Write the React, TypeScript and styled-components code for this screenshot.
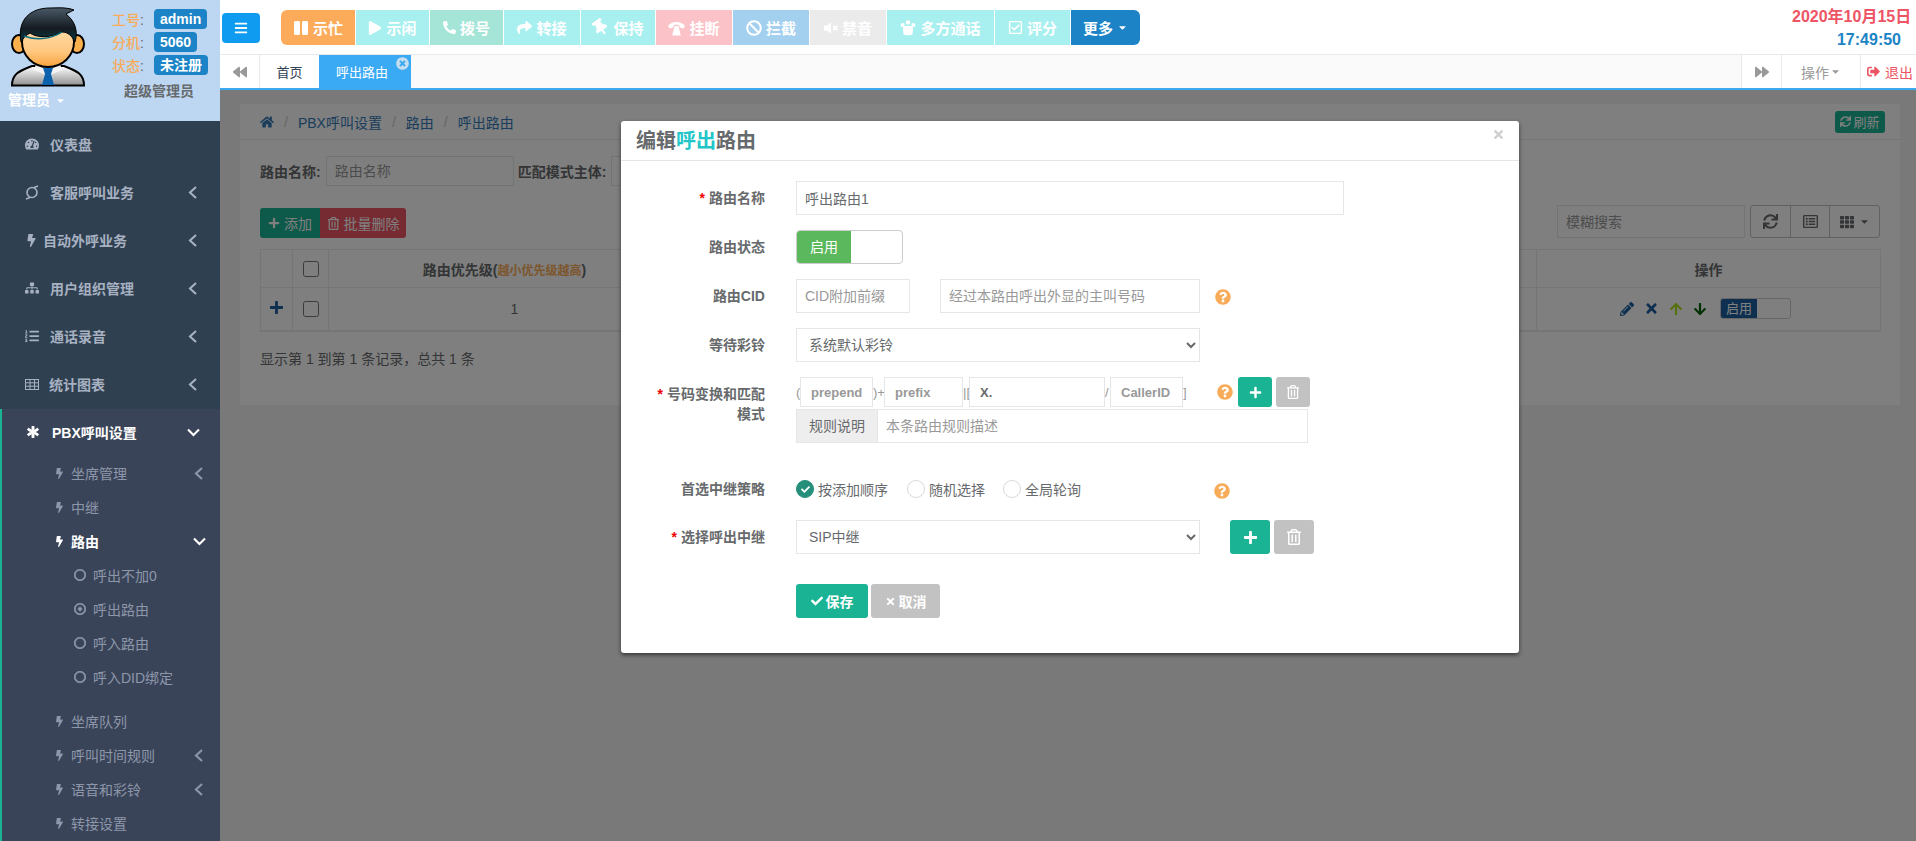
import React from "react";
import styled, { createGlobalStyle } from "styled-components";
import {
  FaArrowDown,
  FaArrowUp,
  FaAsterisk,
  FaBackward,
  FaBan,
  FaBars,
  FaBolt,
  FaCaretDown,
  FaCheck,
  FaForward,
  FaHome,
  FaListOl,
  FaPencilAlt,
  FaPhoneAlt,
  FaPlay,
  FaPause,
  FaPlus,
  FaQuestionCircle,
  FaRegCheckSquare,
  FaRegCircle,
  FaRegDotCircle,
  FaRegListAlt,
  FaRegTrashAlt,
  FaShare,
  FaSignOutAlt,
  FaSitemap,
  FaSync,
  FaTachometerAlt,
  FaTh,
  FaThumbtack,
  FaTimes,
  FaTimesCircle,
  FaVolumeMute,
} from "react-icons/fa";

const GlobalStyle = createGlobalStyle`
  html, body {
    margin: 0;
    padding: 0;
    height: 100%;
    overflow: hidden;
  }
  body {
    font-family: "Liberation Sans", "Noto Sans CJK SC", sans-serif;
    font-size: 14px;
    color: #676a6c;
  }
  * {
    box-sizing: border-box;
  }
`;

const Page = styled.div`
  display: grid;
  grid-template-columns: 220px 1fr;
  width: 1916px;
  height: 841px;
  overflow: hidden;
`;

/* ---------- sidebar ---------- */

const Sidebar = styled.aside`
  background: #2f4050;
  height: 841px;
  overflow: hidden;
`;

const Profile = styled.div`
  height: 121px;
  background: #bdd7f2;
  display: grid;
  grid-template-columns: 112px 1fr;
  padding-top: 5px;
`;

const ProfileLeft = styled.div`
  padding-left: 10px;
`;

const UserName = styled.div`
  color: #fff;
  font-weight: 700;
  font-size: 14px;
  line-height: 18px;
  margin: 1px 0 0 -2px;
  display: flex;
  align-items: center;
  gap: 5px;
`;

const ProfileRight = styled.div`
  padding-top: 4px;
`;

const InfoRow = styled.div`
  display: flex;
  align-items: center;
  height: 20px;
  margin-bottom: 3px;
  font-size: 14px;
`;

const InfoLabel = styled.span`
  color: #f8ac59;
  width: 42px;
  font-weight: 500;
`;

const Colon = styled.span`
  color: #676a6c;
`;

const Badge = styled.span`
  background: #1c84c6;
  color: #fff;
  font-weight: 700;
  font-size: 14px;
  line-height: 20px;
  height: 20px;
  padding: 0 6px;
  border-radius: 4px;
`;

const RoleName = styled.div`
  color: #676a6c;
  font-weight: 700;
  font-size: 14px;
  line-height: 18px;
  margin: 7px 0 0 12px;
`;

const TopItem = styled.div<{ $active?: boolean }>`
  height: 48px;
  display: flex;
  align-items: center;
  padding: 0 0 2px 25px;
  color: ${(p) => (p.$active ? "#fff" : "#a7b1c2")};
  font-weight: ${(p) => (p.$active ? 700 : 600)};
  font-size: 14px;
`;

const TopIcon = styled.span<{ $w: number }>`
  width: ${(p) => p.$w}px;
  display: flex;
  align-items: center;
  flex: none;
`;

const ItemArrow = styled.span<{ $right: number; $light?: boolean }>`
  margin-left: auto;
  margin-right: ${(p) => p.$right}px;
  display: flex;
  color: ${(p) => (p.$light ? "#fff" : "inherit")};
`;

const ActiveGroup = styled.div`
  background: #3a4459;
  border-left: 2px solid #1ab394;
  height: 432px;
`;

const SubItem = styled.div<{ $active?: boolean }>`
  height: 34px;
  display: flex;
  align-items: center;
  padding: 0 0 2px 52px;
  color: ${(p) => (p.$active ? "#fff" : "#8d97aa")};
  font-weight: ${(p) => (p.$active ? 700 : 400)};
`;

const LeafList = styled.div`
  margin-bottom: 10px;
`;

const LeafItem = styled.div`
  height: 34px;
  display: flex;
  align-items: center;
  gap: 7px;
  padding: 0 0 2px 72px;
  color: #8d97aa;
`;

/* ---------- top bar ---------- */

const Main = styled.main`
  display: flex;
  flex-direction: column;
  min-width: 0;
`;

const Topbar = styled.div`
  height: 55px;
  flex: none;
  background: #fff;
  border-bottom: 1px solid #e7eaec;
  display: flex;
  align-items: flex-start;
  padding-left: 2px;
`;

const MenuToggle = styled.button`
  width: 38px;
  height: 30px;
  margin-top: 13px;
  border: none;
  border-radius: 4px;
  background: #0f9bef;
  color: #fff;
  display: flex;
  align-items: center;
  justify-content: center;
  padding: 0;
`;

const ActionGroup = styled.div`
  display: flex;
  gap: 1px;
  margin: 10px 0 0 21px;
`;

const ActionButton = styled.button<{ $bg: string; $w: number }>`
  width: ${(p) => p.$w}px;
  height: 35px;
  border: none;
  padding: 0;
  background: ${(p) => p.$bg};
  color: #fff;
  font-family: inherit;
  font-weight: 700;
  font-size: 15px;
  display: flex;
  align-items: center;
  justify-content: center;
  gap: 4px;
  &:first-child {
    border-radius: 6px 0 0 6px;
  }
  &:last-child {
    border-radius: 0 6px 6px 0;
  }
`;

const TiltedTack = styled(FaThumbtack)`
  transform: rotate(-35deg);
`;

const DateBox = styled.div`
  margin-left: auto;
  width: 124px;
  padding-top: 5px;
  text-align: center;
  font-size: 16px;
  line-height: 23px;
  font-weight: 700;
`;

const DateLine = styled.div`
  color: #ed5565;
  white-space: nowrap;
  padding-right: 6px;
`;

const TimeLine = styled.div`
  color: #1c84c6;
  padding-left: 30px;
`;

const TabBar = styled.div`
  height: 35px;
  flex: none;
  background: #fafafa;
  border-bottom: 2px solid #3baaf0;
  display: flex;
  font-size: 13px;
`;

const TabArrow = styled.div<{ $left?: boolean }>`
  width: 40px;
  background: #fff;
  color: #999;
  display: flex;
  align-items: center;
  justify-content: center;
  border-left: ${(p) => (p.$left ? "1px solid #e7eaec" : "none")};
  border-right: ${(p) => (p.$left ? "none" : "1px solid #e7eaec")};
`;

const Tab = styled.div<{ $active?: boolean }>`
  position: relative;
  width: ${(p) => (p.$active ? 92 : 59)}px;
  background: ${(p) => (p.$active ? "#3baaf5" : "#fff")};
  color: ${(p) => (p.$active ? "#fff" : "#2f4050")};
  display: flex;
  align-items: center;
  justify-content: center;
  padding-right: ${(p) => (p.$active ? 6 : 0)}px;
`;

const TabClose = styled.span`
  position: absolute;
  top: 2px;
  right: 2px;
  color: #c6ddee;
  display: flex;
`;

const TabFill = styled.div`
  flex: 1;
`;

const TabMenu = styled.div`
  width: 79px;
  background: #fff;
  color: #999;
  border-left: 1px solid #e7eaec;
  display: flex;
  align-items: center;
  justify-content: center;
  gap: 1px;
  font-size: 14px;
`;

const TabLogout = styled.div`
  width: 56px;
  background: #fff;
  color: #ed5565;
  border-left: 1px solid #e7eaec;
  display: flex;
  align-items: center;
  justify-content: center;
  gap: 5px;
  padding-left: 3px;
  font-size: 14px;
`;

/* ---------- page behind the dialog ---------- */

const Content = styled.div`
  position: relative;
  flex: 1;
  background: #f3f3f4;
  padding: 14px 16px 0 20px;
`;

const Panel = styled.section`
  background: #fff;
  height: 301px;
`;

const Breadcrumb = styled.div`
  height: 36px;
  border-bottom: 1px solid #e7eaec;
  display: flex;
  align-items: center;
  padding: 0 15px 0 20px;
  color: #337ab7;
`;

const Crumb = styled.span`
  color: #337ab7;
`;

const CrumbSep = styled.span`
  color: #ccc;
  margin: 0 10px;
`;

const RefreshButton = styled.button`
  margin-left: auto;
  height: 22px;
  width: 50px;
  border: none;
  padding: 0;
  border-radius: 3px;
  background: #1ab394;
  color: #fff;
  font-family: inherit;
  font-size: 13px;
  display: flex;
  align-items: center;
  justify-content: center;
  gap: 2px;
`;

const PanelBody = styled.div`
  padding: 16px 20px 0;
`;

const FilterRow = styled.div`
  display: flex;
  align-items: center;
  height: 30px;
`;

const FilterLabel = styled.label`
  font-weight: 700;
  color: #676a6c;
  white-space: nowrap;
`;

const FilterInput = styled.input<{ $w: number }>`
  width: ${(p) => p.$w}px;
  height: 30px;
  margin: 0 4px 0 5px;
  border: 1px solid #e5e6e7;
  padding: 0 8px;
  font-family: inherit;
  font-size: 14px;
  outline: none;
  &::placeholder {
    color: #999;
  }
`;

const ToolRow = styled.div`
  display: flex;
  align-items: flex-end;
  margin-top: 19px;
  height: 33px;
`;

const ToolButton = styled.button<{ $bg: string; $w: number; $side: "left" | "right" }>`
  width: ${(p) => p.$w}px;
  height: 30px;
  border: none;
  padding: 0;
  background: ${(p) => p.$bg};
  color: #fff;
  font-family: inherit;
  font-size: 14px;
  display: flex;
  align-items: center;
  justify-content: center;
  gap: 4px;
  border-radius: ${(p) => (p.$side === "left" ? "3px 0 0 3px" : "0 3px 3px 0")};
`;

const SearchInput = styled.input`
  margin-left: auto;
  width: 188px;
  height: 33px;
  border: 1px solid #e5e6e7;
  padding: 0 8px;
  font-family: inherit;
  font-size: 14px;
  &::placeholder {
    color: #999;
  }
`;

const ColumnTools = styled.div`
  display: flex;
  margin-left: 5px;
  height: 33px;
  border: 1px solid #c2c2c2;
  border-radius: 3px;
  color: #676a6c;
`;

const ColumnTool = styled.div<{ $w: number }>`
  width: ${(p) => p.$w}px;
  display: flex;
  align-items: center;
  justify-content: center;
  gap: 5px;
  & + & {
    border-left: 1px solid #c2c2c2;
  }
`;

const DataTable = styled.table`
  margin-top: 11px;
  width: 1620px;
  border-collapse: collapse;
  table-layout: fixed;
  border: 1px solid #e7eaec;
  border-bottom-width: 2px;
  th,
  td {
    border: 1px solid #e7eaec;
    text-align: center;
    padding: 0;
  }
  th {
    height: 38px;
    font-weight: 700;
  }
  td {
    height: 43px;
  }
`;

const PriorityHead = styled.th`
  && {
    padding-right: 20px;
  }
`;

const Hint = styled.span`
  color: #f8ac59;
  font-size: 12px;
`;

const CheckBox = styled.span`
  display: inline-block;
  width: 16px;
  height: 16px;
  border: 1px solid #767676;
  border-radius: 2.5px;
  background: #fff;
  vertical-align: middle;
`;

const RowActions = styled.div`
  display: flex;
  align-items: center;
  justify-content: flex-end;
  gap: 10px;
  padding-right: 89px;
`;

const MiniSwitch = styled.div`
  width: 71px;
  height: 21px;
  margin-left: 3px;
  border: 1px solid #ccc;
  border-radius: 3px;
  display: flex;
  overflow: hidden;
  font-size: 13px;
`;

const MiniOn = styled.span`
  width: 36px;
  background: #1c5f9e;
  color: #fff;
  text-align: center;
  line-height: 19px;
`;

const TableInfo = styled.div`
  margin-top: 17px;
  line-height: 20px;
`;

/* ---------- dialog ---------- */

const Backdrop = styled.div`
  position: absolute;
  inset: 0;
  background: rgba(0, 0, 0, 0.5);
`;

const Dialog = styled.div`
  position: absolute;
  top: 31px;
  left: 401px;
  width: 898px;
  height: 532px;
  background: #fff;
  border-radius: 3px;
  box-shadow: 0 2px 4px rgba(0, 0, 0, 0.55);
`;

const DialogHeader = styled.div`
  position: relative;
  height: 40px;
  border-bottom: 1px solid #e5e5e5;
  padding-left: 15px;
  font-size: 20px;
  line-height: 40px;
  font-weight: 700;
  color: #676a6c;
`;

const TitleAccent = styled.span`
  color: #23c6c8;
`;

const DialogClose = styled.span`
  position: absolute;
  top: 7px;
  right: 14px;
  color: #d0d0d0;
  display: flex;
`;

const DialogForm = styled.form`
  padding-top: 20px;
`;

const FormRow = styled.div<{ $mt?: number; $mb?: number }>`
  display: grid;
  grid-template-columns: 144px 1fr;
  column-gap: 31px;
  margin-top: ${(p) => p.$mt ?? 0}px;
  margin-bottom: ${(p) => p.$mb ?? 15}px;
`;

const FormLabel = styled.label`
  padding: 7px 0 0 30px;
  text-align: right;
  line-height: 20px;
  font-weight: 600;
  color: #676a6c;
`;

const Required = styled.span`
  color: #e00;
  margin-right: 4px;
`;

const FieldLine = styled.div`
  display: flex;
  align-items: center;
  height: 34px;
`;

const TextInput = styled.input<{ $w: number; $ml?: number }>`
  width: ${(p) => p.$w}px;
  height: 34px;
  margin-left: ${(p) => p.$ml ?? 0}px;
  border: 1px solid #e5e6e7;
  padding: 0 8px;
  font-family: inherit;
  font-size: 14px;
  color: #676a6c;
  outline: none;
  flex: none;
  &::placeholder {
    color: #999;
  }
`;

const SelectInput = styled.select`
  width: 404px;
  height: 34px;
  border: 1px solid #e5e6e7;
  background: #fff;
  padding: 0 8px;
  font-family: inherit;
  font-size: 14px;
  color: #676a6c;
  outline: none;
  flex: none;
`;

const Toggle = styled.div`
  width: 107px;
  height: 34px;
  border: 1px solid #ccc;
  border-radius: 4px;
  display: flex;
  overflow: hidden;
`;

const ToggleOn = styled.span`
  width: 54px;
  background: #5cb85c;
  color: #fff;
  text-align: center;
  line-height: 32px;
`;

const HelpIcon = styled.span<{ $ml: number; $mt?: number }>`
  margin-left: ${(p) => p.$ml}px;
  margin-top: ${(p) => p.$mt ?? 0}px;
  color: #f8ac59;
  display: flex;
  flex: none;
`;

const PatternLine = styled.div`
  display: flex;
  align-items: center;
  height: 30px;
  white-space: nowrap;
`;

const Bracket = styled.span<{ $w: number }>`
  width: ${(p) => p.$w}px;
  flex: none;
  color: #999;
  font-size: 13px;
  overflow: hidden;
`;

const PatternInput = styled.input<{ $w: number }>`
  width: ${(p) => p.$w}px;
  height: 30px;
  border: 1px solid #e5e6e7;
  padding: 0 10px;
  font-family: inherit;
  font-size: 13px;
  font-weight: 700;
  color: #676a6c;
  outline: none;
  flex: none;
  &::placeholder {
    color: #999;
  }
`;

const IconButton = styled.button<{ $bg: string; $w: number; $h: number; $ml?: number }>`
  width: ${(p) => p.$w}px;
  height: ${(p) => p.$h}px;
  margin-left: ${(p) => p.$ml ?? 0}px;
  border: none;
  border-radius: 3px;
  padding: 0;
  background: ${(p) => p.$bg};
  color: #fff;
  display: flex;
  align-items: center;
  justify-content: center;
  flex: none;
`;

const InputGroup = styled.div`
  display: flex;
  width: 512px;
  height: 34px;
  margin-top: 2px;
  border: 1px solid #e5e6e7;
`;

const GroupAddon = styled.span`
  width: 81px;
  background: #eee;
  border-right: 1px solid #e5e6e7;
  text-align: center;
  line-height: 32px;
  flex: none;
`;

const GroupInput = styled.input`
  flex: 1;
  min-width: 0;
  border: none;
  padding: 0 8px;
  font-family: inherit;
  font-size: 14px;
  outline: none;
  &::placeholder {
    color: #999;
  }
`;

const RadioOption = styled.span<{ $w: number }>`
  width: ${(p) => p.$w}px;
  display: flex;
  align-items: center;
  gap: 4px;
  flex: none;
`;

const RadioDot = styled.span<{ $checked?: boolean }>`
  width: 18px;
  height: 18px;
  border-radius: 50%;
  border: 1px solid ${(p) => (p.$checked ? "#258f7b" : "#d9d9d9")};
  background: ${(p) => (p.$checked ? "#258f7b" : "#fff")};
  color: #fff;
  display: flex;
  align-items: center;
  justify-content: center;
  flex: none;
`;

const SubmitButton = styled.button<{ $bg: string; $w: number }>`
  width: ${(p) => p.$w}px;
  height: 34px;
  border: none;
  border-radius: 3px;
  padding: 0;
  margin-right: 3px;
  background: ${(p) => p.$bg};
  color: #fff;
  font-family: inherit;
  font-size: 14px;
  font-weight: 600;
  display: flex;
  align-items: center;
  justify-content: center;
  gap: 3px;
  flex: none;
`;

/* ---------- drawings ---------- */

const Avatar = () => (
  <svg width="76" height="82" viewBox="10 5 76 82">
    <defs>
      <linearGradient id="face" x1="0" y1="0" x2="0" y2="1">
        <stop offset="0" stopColor="#ffe6bd" />
        <stop offset="0.7" stopColor="#ffc77e" />
        <stop offset="1" stopColor="#f7a23c" />
      </linearGradient>
      <linearGradient id="hair" x1="0" y1="0" x2="0" y2="1">
        <stop offset="0" stopColor="#4a5a68" />
        <stop offset="0.6" stopColor="#141a20" />
        <stop offset="1" stopColor="#0a3d4a" />
      </linearGradient>
      <linearGradient id="shirt" x1="0" y1="0" x2="0" y2="1">
        <stop offset="0" stopColor="#ffffff" />
        <stop offset="1" stopColor="#8f8f8f" />
      </linearGradient>
    </defs>
    <path
      d="M12 85.5 C12 74 19 71 32 66 L64 66 C77 71 84 74 84 85.5 Z"
      fill="url(#shirt)"
      stroke="#000"
      strokeWidth="2"
    />
    <path d="M36 64 L48 69 L60 64 L62 70 L50 75 L46 75 L34 70 Z" fill="#f4f4f4" />
    <path d="M43 68 L53 68 L51 74 L54 85 L42 85 L45 74 Z" fill="#0d62ad" />
    <ellipse cx="19" cy="44" rx="7" ry="9" fill="#fbb04e" stroke="#000" strokeWidth="2" />
    <ellipse cx="77" cy="44" rx="7" ry="9" fill="#fbb04e" stroke="#000" strokeWidth="2" />
    <ellipse cx="48" cy="42" rx="26" ry="25" fill="url(#face)" stroke="#000" strokeWidth="2" />
    <path
      d="M21 42 C17 20 30 8 50 8 C58 8 66 7 74 10 C70 12 68 13 66 14 C76 22 78 32 75 42 C72 36 68 32 62 32 C52 38 36 38 30 33 C26 35 23 38 21 42 Z"
      fill="url(#hair)"
      stroke="#000"
      strokeWidth="1"
    />
    <path d="M24 36 C34 40 50 40 62 32" fill="none" stroke="#0f6f80" strokeWidth="1.5" />
  </svg>
);

const HangupIcon = () => (
  <svg width="17" height="16" viewBox="0 0 16 15" fill="currentColor">
    <path d="M0 5.5 C3 0.5 13 0.5 16 5.5 L14.6 8 L11 7 L10.6 4.8 C9 4.2 7 4.2 5.4 4.8 L5 7 L1.4 8 Z" />
    <path d="M4 14.5 L5.8 7 L6.2 5.6 L9.8 5.6 L10.2 7 L12 14.5 Z" />
  </svg>
);

const SwirlIcon = () => (
  <svg width="14" height="15" viewBox="0 0 14 15" fill="none" stroke="currentColor" strokeWidth="1.6">
    <circle cx="7" cy="7.5" r="5" />
    <path d="M9 2.5 L13 1 M5 12.5 L1 14" />
  </svg>
);

const GridIcon = () => (
  <svg width="14" height="11" viewBox="0 0 14 11" fill="none" stroke="currentColor" strokeWidth="1">
    <rect x="0.5" y="0.5" width="13" height="10" />
    <path d="M0.5 3.8 H13.5 M0.5 7.2 H13.5 M5 0.5 V10.5 M9.5 0.5 V10.5" />
  </svg>
);

const GroupCallIcon = () => (
  <svg width="16" height="16" viewBox="0 0 16 16" fill="currentColor">
    <circle cx="2.6" cy="5" r="2" />
    <circle cx="8" cy="2.4" r="2.2" />
    <circle cx="13.4" cy="5" r="2" />
    <path d="M4.8 6 H11.2 C12.4 6 13 7 13 8.5 L12.5 14.5 C12 15.6 4 15.6 3.5 14.5 L3 8.5 C3 7 3.6 6 4.8 6 Z" />
  </svg>
);

const ChevronLeft = () => (
  <svg width="9" height="13" viewBox="0 0 9 13" fill="none" stroke="currentColor" strokeWidth="2.1">
    <path d="M8 1 L2 6.5 L8 12" />
  </svg>
);

const ChevronDown = () => (
  <svg width="13" height="9" viewBox="0 0 13 9" fill="none" stroke="currentColor" strokeWidth="2.1">
    <path d="M1 1.5 L6.5 7 L12 1.5" />
  </svg>
);

/* ---------- data ---------- */

const actions = [
  { label: "示忙", bg: "#fbab5a", w: 74, icon: <FaPause size={16} /> },
  { label: "示闲", bg: "#a8f0ef", w: 73, icon: <FaPlay size={14} /> },
  { label: "拨号", bg: "#a5e5d8", w: 73, icon: <FaPhoneAlt size={13} /> },
  { label: "转接", bg: "#a8f0ef", w: 76, icon: <FaShare size={15} /> },
  { label: "保持", bg: "#a8f0ef", w: 74, icon: <TiltedTack size={17} /> },
  { label: "挂断", bg: "#fbc2c8", w: 76, icon: <HangupIcon /> },
  { label: "拦截", bg: "#a4d0f0", w: 76, icon: <FaBan size={16} /> },
  { label: "禁音", bg: "#ebebeb", w: 76, icon: <FaVolumeMute size={14} /> },
  { label: "多方通话", bg: "#a8f0ef", w: 107, icon: <GroupCallIcon /> },
  { label: "评分", bg: "#a8f0ef", w: 75, icon: <FaRegCheckSquare size={15} /> },
];

const topItems = [
  { label: "仪表盘", icon: <FaTachometerAlt size={14} />, w: 25, arrow: false },
  { label: "客服呼叫业务", icon: <SwirlIcon />, w: 25, arrow: true },
  { label: "自动外呼业务", icon: <FaBolt size={13} />, w: 18, arrow: true },
  { label: "用户组织管理", icon: <FaSitemap size={14} />, w: 25, arrow: true },
  { label: "通话录音", icon: <FaListOl size={14} />, w: 25, arrow: true },
  { label: "统计图表", icon: <GridIcon />, w: 24, arrow: true },
];

const subIcon = (
  <TopIcon $w={17}>
    <FaBolt size={11} />
  </TopIcon>
);

const App = () => (
  <>
    <GlobalStyle />
    <Page>
      <Sidebar>
        <Profile>
          <ProfileLeft>
            <Avatar />
            <UserName>
              管理员 <FaCaretDown size={11} />
            </UserName>
          </ProfileLeft>
          <ProfileRight>
            <InfoRow>
              <InfoLabel>
                工号<Colon>:</Colon>
              </InfoLabel>
              <Badge>admin</Badge>
            </InfoRow>
            <InfoRow>
              <InfoLabel>
                分机<Colon>:</Colon>
              </InfoLabel>
              <Badge>5060</Badge>
            </InfoRow>
            <InfoRow>
              <InfoLabel>
                状态<Colon>:</Colon>
              </InfoLabel>
              <Badge>未注册</Badge>
            </InfoRow>
            <RoleName>超级管理员</RoleName>
          </ProfileRight>
        </Profile>

        {topItems.map((item) => (
          <TopItem key={item.label}>
            <TopIcon $w={item.w}>{item.icon}</TopIcon>
            {item.label}
            {item.arrow && (
              <ItemArrow $right={23}>
                <ChevronLeft />
              </ItemArrow>
            )}
          </TopItem>
        ))}

        <ActiveGroup>
          <TopItem $active>
            <TopIcon $w={25}>
              <FaAsterisk size={12} stroke="currentColor" strokeWidth={40} />
            </TopIcon>
            PBX呼叫设置
            <ItemArrow $right={20}>
              <ChevronDown />
            </ItemArrow>
          </TopItem>
          <SubItem>
            {subIcon}坐席管理
            <ItemArrow $right={17}>
              <ChevronLeft />
            </ItemArrow>
          </SubItem>
          <SubItem>{subIcon}中继</SubItem>
          <SubItem $active>
            {subIcon}路由
            <ItemArrow $right={14}>
              <ChevronDown />
            </ItemArrow>
          </SubItem>
          <LeafList>
            <LeafItem>
              <FaRegCircle size={12} stroke="currentColor" strokeWidth={30} />
              呼出不加0
            </LeafItem>
            <LeafItem>
              <FaRegDotCircle size={12} stroke="currentColor" strokeWidth={30} />
              呼出路由
            </LeafItem>
            <LeafItem>
              <FaRegCircle size={12} stroke="currentColor" strokeWidth={30} />
              呼入路由
            </LeafItem>
            <LeafItem>
              <FaRegCircle size={12} stroke="currentColor" strokeWidth={30} />
              呼入DID绑定
            </LeafItem>
          </LeafList>
          <SubItem>{subIcon}坐席队列</SubItem>
          <SubItem>
            {subIcon}呼叫时间规则
            <ItemArrow $right={17}>
              <ChevronLeft />
            </ItemArrow>
          </SubItem>
          <SubItem>
            {subIcon}语音和彩铃
            <ItemArrow $right={17}>
              <ChevronLeft />
            </ItemArrow>
          </SubItem>
          <SubItem>{subIcon}转接设置</SubItem>
        </ActiveGroup>
      </Sidebar>

      <Main>
        <Topbar>
          <MenuToggle>
            <FaBars size={14} />
          </MenuToggle>
          <ActionGroup>
            {actions.map((a) => (
              <ActionButton key={a.label} $bg={a.bg} $w={a.w}>
                {a.icon}
                {a.label}
              </ActionButton>
            ))}
            <ActionButton $bg="#1c84c6" $w={69}>
              更多 <FaCaretDown size={11} />
            </ActionButton>
          </ActionGroup>
          <DateBox>
            <DateLine>2020年10月15日</DateLine>
            <TimeLine>17:49:50</TimeLine>
          </DateBox>
        </Topbar>

        <TabBar>
          <TabArrow>
            <FaBackward size={14} />
          </TabArrow>
          <Tab>首页</Tab>
          <Tab $active>
            呼出路由
            <TabClose>
              <FaTimesCircle size={13} />
            </TabClose>
          </Tab>
          <TabFill />
          <TabArrow $left>
            <FaForward size={14} />
          </TabArrow>
          <TabMenu>
            操作 <FaCaretDown size={11} />
          </TabMenu>
          <TabLogout>
            <FaSignOutAlt size={13} />
            退出
          </TabLogout>
        </TabBar>

        <Content>
          <Panel>
            <Breadcrumb>
              <FaHome size={14} />
              <CrumbSep>/</CrumbSep>
              <Crumb>PBX呼叫设置</Crumb>
              <CrumbSep>/</CrumbSep>
              <Crumb>路由</Crumb>
              <CrumbSep>/</CrumbSep>
              <Crumb>呼出路由</Crumb>
              <RefreshButton>
                <FaSync size={11} />
                刷新
              </RefreshButton>
            </Breadcrumb>
            <PanelBody>
              <FilterRow>
                <FilterLabel>路由名称:</FilterLabel>
                <FilterInput $w={188} placeholder="路由名称" />
                <FilterLabel>匹配模式主体:</FilterLabel>
                <FilterInput $w={188} placeholder="匹配模式主体" />
              </FilterRow>
              <ToolRow>
                <ToolButton $bg="#1ab394" $w={60} $side="left">
                  <FaPlus size={12} />
                  添加
                </ToolButton>
                <ToolButton $bg="#ed5565" $w={86} $side="right">
                  <FaRegTrashAlt size={13} />
                  批量删除
                </ToolButton>
                <SearchInput placeholder="模糊搜索" />
                <ColumnTools>
                  <ColumnTool $w={39}>
                    <FaSync size={15} />
                  </ColumnTool>
                  <ColumnTool $w={39}>
                    <FaRegListAlt size={15} />
                  </ColumnTool>
                  <ColumnTool $w={50}>
                    <FaTh size={14} />
                    <FaCaretDown size={11} />
                  </ColumnTool>
                </ColumnTools>
              </ToolRow>
              <DataTable>
                <colgroup>
                  <col width="32" />
                  <col width="36" />
                  <col width="372" />
                  <col width="836" />
                  <col width="344" />
                </colgroup>
                <thead>
                  <tr>
                    <th />
                    <th>
                      <CheckBox />
                    </th>
                    <PriorityHead>
                      路由优先级(<Hint>越小优先级越高</Hint>)
                    </PriorityHead>
                    <th />
                    <th>操作</th>
                  </tr>
                </thead>
                <tbody>
                  <tr>
                    <td>
                      <FaPlus size={15} color="#1c5f9e" />
                    </td>
                    <td>
                      <CheckBox />
                    </td>
                    <td>1</td>
                    <td />
                    <td>
                      <RowActions>
                        <FaPencilAlt size={14} color="#1c5f9e" />
                        <FaTimes size={15} color="#1c5f9e" />
                        <FaArrowUp size={14} color="#aee020" />
                        <FaArrowDown size={14} color="#066106" />
                        <MiniSwitch>
                          <MiniOn>启用</MiniOn>
                        </MiniSwitch>
                      </RowActions>
                    </td>
                  </tr>
                </tbody>
              </DataTable>
              <TableInfo>显示第 1 到第 1 条记录，总共 1 条</TableInfo>
            </PanelBody>
          </Panel>

          <Backdrop />

          <Dialog>
            <DialogHeader>
              编辑<TitleAccent>呼出</TitleAccent>路由
              <DialogClose>
                <FaTimes size={13} />
              </DialogClose>
            </DialogHeader>
            <DialogForm>
              <FormRow>
                <FormLabel>
                  <Required>*</Required>路由名称
                </FormLabel>
                <FieldLine>
                  <TextInput $w={548} defaultValue="呼出路由1" />
                </FieldLine>
              </FormRow>
              <FormRow>
                <FormLabel>路由状态</FormLabel>
                <FieldLine>
                  <Toggle>
                    <ToggleOn>启用</ToggleOn>
                  </Toggle>
                </FieldLine>
              </FormRow>
              <FormRow>
                <FormLabel>路由CID</FormLabel>
                <FieldLine>
                  <TextInput $w={114} placeholder="CID附加前缀" />
                  <TextInput $w={260} $ml={30} placeholder="经过本路由呼出外显的主叫号码" />
                  <HelpIcon $ml={15} $mt={2}>
                    <FaQuestionCircle size={16} />
                  </HelpIcon>
                </FieldLine>
              </FormRow>
              <FormRow>
                <FormLabel>等待彩铃</FormLabel>
                <FieldLine>
                  <SelectInput defaultValue="系统默认彩铃">
                    <option>系统默认彩铃</option>
                  </SelectInput>
                </FieldLine>
              </FormRow>
              <FormRow $mb={29}>
                <FormLabel>
                  <Required>*</Required>号码变换和匹配模式
                </FormLabel>
                <div>
                  <PatternLine>
                    <Bracket $w={4}>(</Bracket>
                    <PatternInput $w={73} placeholder="prepend" />
                    <Bracket $w={11}>)+</Bracket>
                    <PatternInput $w={79} placeholder="prefix" />
                    <Bracket $w={6}>|[</Bracket>
                    <PatternInput $w={136} defaultValue="X." />
                    <Bracket $w={5}>/</Bracket>
                    <PatternInput $w={73} placeholder="CallerID" />
                    <Bracket $w={7}>]</Bracket>
                    <HelpIcon $ml={27}>
                      <FaQuestionCircle size={16} />
                    </HelpIcon>
                    <IconButton $bg="#1ab394" $w={34} $h={30} $ml={5}>
                      <FaPlus size={13} />
                    </IconButton>
                    <IconButton $bg="#c2c2c2" $w={34} $h={30} $ml={4}>
                      <FaRegTrashAlt size={14} />
                    </IconButton>
                  </PatternLine>
                  <InputGroup>
                    <GroupAddon>规则说明</GroupAddon>
                    <GroupInput placeholder="本条路由规则描述" />
                  </InputGroup>
                </div>
              </FormRow>
              <FormRow $mb={14}>
                <FormLabel>首选中继策略</FormLabel>
                <FieldLine>
                  <RadioOption $w={111}>
                    <RadioDot $checked>
                      <FaCheck size={9} />
                    </RadioDot>
                    按添加顺序
                  </RadioOption>
                  <RadioOption $w={96}>
                    <RadioDot />
                    随机选择
                  </RadioOption>
                  <RadioOption $w={211}>
                    <RadioDot />
                    全局轮询
                  </RadioOption>
                  <HelpIcon $ml={0} $mt={3}>
                    <FaQuestionCircle size={16} />
                  </HelpIcon>
                </FieldLine>
              </FormRow>
              <FormRow $mb={30}>
                <FormLabel>
                  <Required>*</Required>选择呼出中继
                </FormLabel>
                <FieldLine>
                  <SelectInput defaultValue="SIP中继">
                    <option>SIP中继</option>
                  </SelectInput>
                  <IconButton $bg="#1ab394" $w={40} $h={34} $ml={30}>
                    <FaPlus size={15} />
                  </IconButton>
                  <IconButton $bg="#c2c2c2" $w={40} $h={34} $ml={4}>
                    <FaRegTrashAlt size={16} />
                  </IconButton>
                </FieldLine>
              </FormRow>
              <FormRow>
                <span />
                <FieldLine>
                  <SubmitButton $bg="#1ab394" $w={72}>
                    <FaCheck size={12} />
                    保存
                  </SubmitButton>
                  <SubmitButton $bg="#c2c2c2" $w={69}>
                    <FaTimes size={11} />
                    取消
                  </SubmitButton>
                </FieldLine>
              </FormRow>
            </DialogForm>
          </Dialog>
        </Content>
      </Main>
    </Page>
  </>
);

export default App;
